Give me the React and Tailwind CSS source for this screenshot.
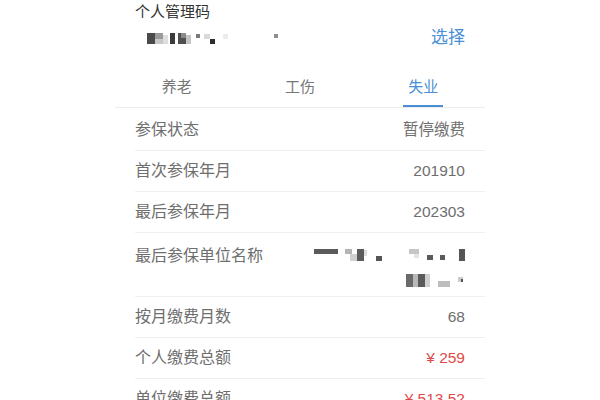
import React from "react";

const font = { fontFamily: '"Liberation Sans", "Noto Sans CJK SC", sans-serif' };

function Block({ x, y, w, h, c }) {
  return (
    <div
      className="absolute"
      style={{ left: x, top: y, width: w, height: h, background: c }}
    />
  );
}

function Mosaic({ blocks, className }) {
  return (
    <div className={"relative " + className}>
      {blocks.map((b, i) => (
        <Block key={i} {...b} />
      ))}
    </div>
  );
}

const codeBlocks = [
  { x: 0, y: 0, w: 8, h: 11, c: "#4a4a4a" },
  { x: 8, y: 0, w: 8, h: 6, c: "#9a9a9a" },
  { x: 8, y: 6, w: 8, h: 5, c: "#c8c8c8" },
  { x: 16, y: 2, w: 5, h: 9, c: "#dedede" },
  { x: 23, y: 0, w: 5, h: 11, c: "#3c3c3c" },
  { x: 31, y: 0, w: 8, h: 11, c: "#505050" },
  { x: 34, y: 0, w: 5, h: 5, c: "#8a8a8a" },
  { x: 39, y: 2, w: 5, h: 9, c: "#c4c4c4" },
  { x: 49, y: 1, w: 4, h: 4, c: "#7a7a7a" },
  { x: 57, y: 1, w: 6, h: 5, c: "#dadada" },
  { x: 63, y: 6, w: 5, h: 5, c: "#2e2e2e" },
  { x: 76, y: 1, w: 5, h: 5, c: "#ececec" },
  { x: 127, y: 1, w: 4, h: 4, c: "#8e8e8e" },
];

const unitBlocks1 = [
  { x: 0, y: 0, w: 24, h: 5, c: "#5a5a5a" },
  { x: 31, y: 0, w: 7, h: 5, c: "#b4b4b4" },
  { x: 36, y: 5, w: 7, h: 7, c: "#d0d0d0" },
  { x: 43, y: 0, w: 7, h: 12, c: "#5c5c5c" },
  { x: 50, y: 1, w: 3, h: 6, c: "#dcdcdc" },
  { x: 62, y: 7, w: 6, h: 5, c: "#555" },
  { x: 95, y: 0, w: 10, h: 5, c: "#c6c6c6" },
  { x: 100, y: 5, w: 5, h: 4, c: "#e4e4e4" },
  { x: 113, y: 6, w: 6, h: 5, c: "#5a5a5a" },
  { x: 126, y: 6, w: 5, h: 5, c: "#5a5a5a" },
  { x: 145, y: 0, w: 6, h: 12, c: "#555" },
];

const unitBlocks2 = [
  { x: 0, y: 0, w: 7, h: 13, c: "#6a6a6a" },
  { x: 7, y: 0, w: 5, h: 13, c: "#b8b8b8" },
  { x: 12, y: 0, w: 7, h: 13, c: "#5a5a5a" },
  { x: 19, y: 0, w: 5, h: 13, c: "#cfcfcf" },
  { x: 32, y: 7, w: 12, h: 6, c: "#bdbdbd" },
  { x: 52, y: 3, w: 5, h: 5, c: "#cccccc" },
  { x: 55, y: 5, w: 2, h: 3, c: "#555" },
];

function Row({ label, value, red, first }) {
  return (
    <div
      className={
        "ml-5 flex items-center justify-between border-b border-[#f0f0f0] pr-5 " +
        (first ? "h-[43px] pt-[2px]" : "h-[41px]")
      }
    >
      <span className="text-[16px] text-[#6e6e6e]">{label}</span>
      <span className={"text-[15.5px] " + (red ? "text-[#df4a4a]" : "text-[#6e6e6e]")}>
        {value}
      </span>
    </div>
  );
}

export default function App() {
  return (
    <div className="h-[400px] w-[600px] overflow-hidden bg-white" style={font}>
      <div className="mx-auto w-[370px]">
        <div className="px-5 text-[15px] leading-[24px] text-[#333]">个人管理码</div>
        <div className="flex h-[28px] items-center justify-between pl-[32px] pr-5">
          <Mosaic blocks={codeBlocks} className="h-[11px] w-[135px]" />
          <span className="text-[17px] text-[#4a8fd6]">选择</span>
        </div>
        <div className="mt-[12px] grid grid-cols-3 border-b border-[#ececec]">
          {[
            ["养老", false],
            ["工伤", false],
            ["失业", true],
          ].map(([t, active]) => (
            <div
              key={t}
              className={
                "relative flex h-[43px] items-center justify-center pt-[3px] text-[15px] " +
                (active ? "text-[#4a8fd6]" : "text-[#777]")
              }
            >
              {t}
              {active && (
                <div className="absolute bottom-0 left-1/2 h-[2px] w-[40px] -translate-x-1/2 bg-[#4a8fd6]" />
              )}
            </div>
          ))}
        </div>
        <Row label="参保状态" value="暂停缴费" first />
        <Row label="首次参保年月" value="201910" />
        <Row label="最后参保年月" value="202303" />
        <div className="ml-5 flex h-[64px] justify-between border-b border-[#f0f0f0] pr-5">
          <span className="pt-[11px] text-[16px] leading-[24px] text-[#6e6e6e]">最后参保单位名称</span>
          <div className="flex flex-col items-end pt-[16px]">
            <Mosaic blocks={unitBlocks1} className="h-[12px] w-[151px]" />
            <Mosaic blocks={unitBlocks2} className="mr-[2px] mt-[13px] h-[13px] w-[57px]" />
          </div>
        </div>
        <Row label="按月缴费月数" value="68" />
        <Row label="个人缴费总额" value="¥ 259" red />
        <Row label="单位缴费总额" value="¥ 513.52" red />
      </div>
    </div>
  );
}
